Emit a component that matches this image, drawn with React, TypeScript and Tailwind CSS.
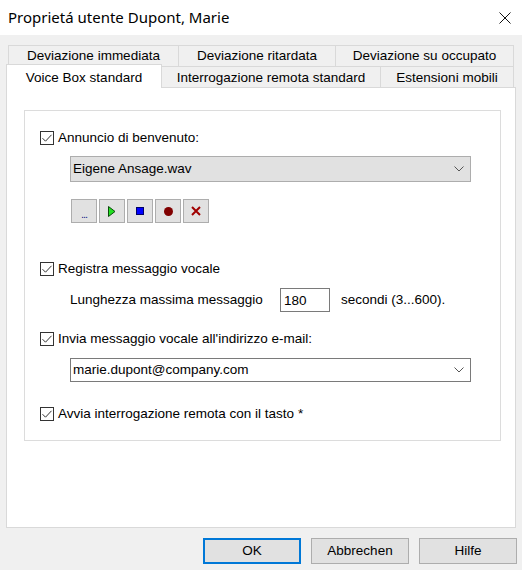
import React from 'react';

const ui = { fontFamily: '"Liberation Sans", Arial, sans-serif' };

function CheckBox({ label }: { label: string }) {
  return (
    <div className="flex h-[14px] items-center">
      <div className="flex h-[14px] w-[14px] shrink-0 items-center justify-center border border-[#333333] bg-white">
        <svg width="12" height="12" viewBox="0 0 12 12">
          <path d="M1.5 6.2 L4.5 9.2 L10.5 2.8" fill="none" stroke="#333333" strokeWidth="1" />
        </svg>
      </div>
      <span className="ml-[4px] text-[13.5px] leading-none text-black">{label}</span>
    </div>
  );
}

function Chevron() {
  return (
    <svg width="10" height="6" viewBox="0 0 10 6" className="shrink-0">
      <path d="M0.5 0.5 L5 5 L9.5 0.5" fill="none" stroke="#555555" strokeWidth="1" />
    </svg>
  );
}

function MediaButton({ children }: { children: React.ReactNode }) {
  return (
    <div className="flex h-[24px] w-[26px] items-center justify-center border border-[#adadad] bg-[#e1e1e1]">
      {children}
    </div>
  );
}

function Tab({ label, className }: { label: string; className: string }) {
  return (
    <div className={`flex items-center justify-center border-t border-[#d9d9d9] bg-[#f0f0f0] text-[13.5px] text-black ${className}`}>
      {label}
    </div>
  );
}

export default function App() {
  return (
    <div className="flex h-[570px] w-[522px] flex-col bg-[#f0f0f0] text-black" style={ui}>
      {/* Title bar */}
      <div className="flex h-[35px] items-center justify-between bg-white pl-[8px] pr-[11px]">
        <span className="text-[15px]" style={{ fontFamily: '"Noto Sans", "Open Sans", sans-serif' }}>
          Proprietá utente Dupont, Marie
        </span>
        <svg width="12" height="12" viewBox="0 0 12 12" className="mt-[1px]">
          <path d="M0.5 0.5 L11.5 11.5 M11.5 0.5 L0.5 11.5" stroke="#111111" strokeWidth="1" />
        </svg>
      </div>

      {/* Tab rows */}
      <div className="mt-[10px] flex h-[21px] pl-[8px]">
        <Tab label="Deviazione immediata" className="w-[170px] border-l" />
        <Tab label="Deviazione ritardata" className="w-[157px] border-l" />
        <Tab label="Deviazione su occupato" className="w-[179px] border-l border-r" />
      </div>
      <div className="flex h-[21px] pl-[6px]">
        <div className="relative z-10 -mt-[2px] flex h-[24px] w-[156px] items-start justify-center border-l border-r border-t border-[#d9d9d9] bg-white pt-[3px] text-[13.5px]">
          Voice Box standard
        </div>
        <Tab label="Interrogazione remota standard" className="w-[218px] pt-[2px]" />
        <Tab label="Estensioni mobili" className="w-[134px] border-l border-r pt-[2px]" />
      </div>

      {/* Tab page */}
      <div className="ml-[6px] h-[441px] w-[510px] border border-[#d9d9d9] bg-white pl-[17px] pt-[22px]">
        <div className="flex h-[331px] w-[477px] flex-col border border-[#dcdcdc] pl-[15px] pt-[20px]">
          <CheckBox label="Annuncio di benvenuto:" />

          <div className="ml-[30px] mt-[11px] flex h-[26px] w-[401px] items-center justify-between border border-[#adadad] bg-[#e1e1e1] pl-[2px] pr-[6px] text-[13.5px]">
            <span>Eigene Ansage.wav</span>
            <Chevron />
          </div>

          <div className="ml-[31px] mt-[17px] flex gap-[2px]">
            <MediaButton>
              <span className="mt-[6px] text-[11px] leading-none tracking-[-1px] text-[#1a1a8c]">...</span>
            </MediaButton>
            <MediaButton>
              <svg width="8" height="11" viewBox="0 0 8 11">
                <path d="M0.5 0.5 L7 5.5 L0.5 10.5 Z" fill="#22e022" stroke="#0a4a0a" strokeWidth="1" />
              </svg>
            </MediaButton>
            <MediaButton>
              <div className="h-[8px] w-[8px] border border-[#000066] bg-[#0000ff]" />
            </MediaButton>
            <MediaButton>
              <div className="h-[9px] w-[9px] rounded-full bg-[#800000]" />
            </MediaButton>
            <MediaButton>
              <svg width="10" height="10" viewBox="0 0 10 10">
                <path d="M1 1 L9 9 M9 1 L1 9" stroke="#a00000" strokeWidth="2" />
              </svg>
            </MediaButton>
          </div>

          <div className="mt-[39px]">
            <CheckBox label="Registra messaggio vocale" />
          </div>

          <div className="ml-[30px] mt-[12px] flex items-center text-[13.5px]">
            <span className="w-[210px]">Lunghezza massima messaggio</span>
            <div className="flex h-[24px] w-[50px] items-start border border-[#7a7a7a] bg-white pl-[3px] pt-[2px]">180</div>
            <span className="ml-[11px]">secondi (3...600).</span>
          </div>

          <div className="mt-[20px]">
            <CheckBox label="Invia messaggio vocale all'indirizzo e-mail:" />
          </div>

          <div className="ml-[30px] mt-[12px] flex h-[24px] w-[401px] items-center justify-between border border-[#7a7a7a] bg-white pl-[2px] pr-[6px] text-[13.5px]">
            <span>marie.dupont@company.com</span>
            <Chevron />
          </div>

          <div className="mt-[25px]">
            <CheckBox label="Avvia interrogazione remota con il tasto *" />
          </div>
        </div>
      </div>

      {/* Dialog buttons */}
      <div className="mt-[10px] flex justify-end gap-[10px] pr-[5px] text-[13.5px]">
        <div className="flex h-[26px] w-[98px] items-center justify-center border-2 border-[#0078d7] bg-[#e1e1e1]">OK</div>
        <div className="flex h-[26px] w-[98px] items-center justify-center border border-[#adadad] bg-[#e1e1e1]">Abbrechen</div>
        <div className="flex h-[26px] w-[98px] items-center justify-center border border-[#adadad] bg-[#e1e1e1]">Hilfe</div>
      </div>
    </div>
  );
}
